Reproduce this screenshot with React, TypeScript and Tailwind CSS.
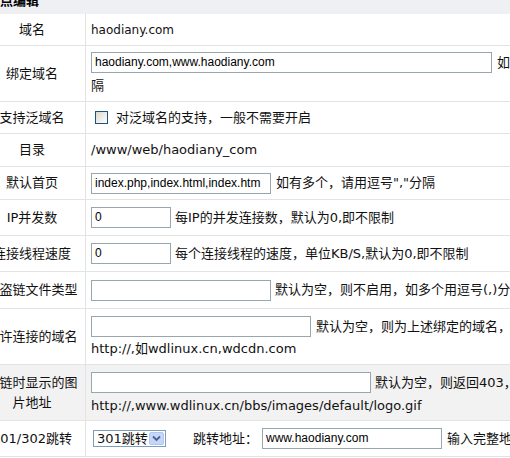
import React from 'react';

const cjk = "font-['DejaVu_Sans','Noto_Sans_CJK_SC',sans-serif]";
const inputFont = "font-['Liberation_Sans','Noto_Sans_CJK_SC',sans-serif]";

const Field = ({ w, value = '' }: { w: string; value?: string }) => (
  <div
    className={`${w} h-[21px] shrink-0 border border-[#98a6ad] bg-white px-[3px] text-[12px] leading-[19px] text-black overflow-hidden whitespace-nowrap ${inputFont}`}
  >
    {value}
  </div>
);

const Row = ({
  label,
  h,
  bg = 'bg-white',
  children,
}: {
  label: React.ReactNode;
  h: string;
  bg?: string;
  children: React.ReactNode;
}) => (
  <div className={`flex ${h} ${bg} border-b border-[#e3e3e3]`}>
    <div className="w-[107px] shrink-0 flex items-center justify-center border-r border-[#e3e3e3] px-[6px] text-center leading-[20px]">
      {label}
    </div>
    <div className="flex-1 min-w-0 flex flex-col justify-center pl-[5px]">{children}</div>
  </div>
);

export default function App() {
  return (
    <div className={`w-[510px] h-[458px] overflow-hidden bg-white text-[13px] text-[#111] ${cjk}`}>
      <div className="w-[600px] -ml-[21px] -mt-[14px]">
        {/* header */}
        <div className="h-[28px] bg-[#eef0f3] pl-[8px] pt-[5px] font-bold text-[13px] leading-[20px] text-black">
          站点编辑
        </div>

        <Row label="域名" h="h-[32px]">
          <span className="text-[12px] leading-[20px] pl-[-1px]">haodiany.com</span>
        </Row>

        <Row label="绑定域名" h="h-[56px]">
          <div className="flex flex-col justify-start h-full pt-[6px]">
            <div className="flex items-center gap-[5px] whitespace-nowrap">
              <Field w="w-[401px]" value="haodiany.com,www.haodiany.com" />
              <span>如有多个，请用逗号","分</span>
            </div>
            <div className="mt-[3px] leading-[20px]">隔</div>
          </div>
        </Row>

        <Row label="支持泛域名" h="h-[32px]">
          <div className="flex items-center whitespace-nowrap">
            <div className="ml-[4px] w-[13px] h-[13px] border border-[#1c5180] bg-gradient-to-br from-[#dcd8d0] to-white" />
            <span className="ml-[8px]">对泛域名的支持，一般不需要开启</span>
          </div>
        </Row>

        <Row label="目录" h="h-[33px]">
          <span className="leading-[20px]">/www/web/haodiany_com</span>
        </Row>

        <Row label="默认首页" h="h-[33px]">
          <div className="flex items-center gap-[5px] whitespace-nowrap">
            <Field w="w-[180px]" value="index.php,index.html,index.htm" />
            <span>如有多个，请用逗号","分隔</span>
          </div>
        </Row>

        <Row label="IP并发数" h="h-[36px]">
          <div className="flex items-center gap-[4px] whitespace-nowrap">
            <Field w="w-[80px]" value="0" />
            <span>每IP的并发连接数，默认为0,即不限制</span>
          </div>
        </Row>

        <Row label="连接线程速度" h="h-[36px]">
          <div className="flex items-center gap-[4px] whitespace-nowrap">
            <Field w="w-[80px]" value="0" />
            <span>每个连接线程的速度，单位KB/S,默认为0,即不限制</span>
          </div>
        </Row>

        <Row label={<span className="whitespace-nowrap">防盗链文件类型</span>} h="h-[37px]">
          <div className="flex items-center gap-[4px] whitespace-nowrap">
            <Field w="w-[180px]" />
            <span>默认为空，则不启用，如多个用逗号(,)分隔</span>
          </div>
        </Row>

        <Row label={<span className="whitespace-nowrap">允许连接的域名</span>} h="h-[56px]">
          <div className="flex flex-col justify-start h-full pt-[7px]">
            <div className="flex items-center gap-[5px] whitespace-nowrap">
              <Field w="w-[220px]" />
              <span>默认为空，则为上述绑定的域名，不需要加</span>
            </div>
            <div className="mt-[2px] leading-[20px] whitespace-nowrap">http://,如wdlinux.cn,wdcdn.com</div>
          </div>
        </Row>

        <Row label="盗链时显示的图片地址" h="h-[56px]" bg="bg-[#f2f2f2]">
          <div className="flex flex-col justify-start h-full pt-[7px]">
            <div className="flex items-center gap-[4px] whitespace-nowrap">
              <Field w="w-[280px]" />
              <span>默认为空，则返回403，</span>
            </div>
            <div className="mt-[3px] leading-[20px] whitespace-nowrap">
              http://,www.wdlinux.cn/bbs/images/default/logo.gif
            </div>
          </div>
        </Row>

        <Row label={<span className="whitespace-nowrap">301/302跳转</span>} h="h-[36px]">
          <div className="flex items-center whitespace-nowrap">
            <div className="ml-[2px] w-[73px] h-[17px] flex items-center justify-between border border-[#7f9db9] bg-white pl-[3px] pr-[1px]">
              <span className="text-[13px] leading-[15px]">301跳转</span>
              <div className="w-[15px] h-[13px] flex items-center justify-center rounded-[2px] border border-[#b4c6ee] bg-[#c5d6fc]">
                <svg width="9" height="7" viewBox="0 0 9 7">
                  <path d="M1 1.5 L4.5 5 L8 1.5" fill="none" stroke="#4d6185" strokeWidth="1.8" />
                </svg>
              </div>
            </div>
            <span className="ml-[27px]">跳转地址：</span>
            <div className="ml-[4px]">
              <Field w="w-[180px]" value="www.haodiany.com" />
            </div>
            <span className="ml-[5px]">输入完整地址</span>
          </div>
        </Row>
      </div>
    </div>
  );
}
